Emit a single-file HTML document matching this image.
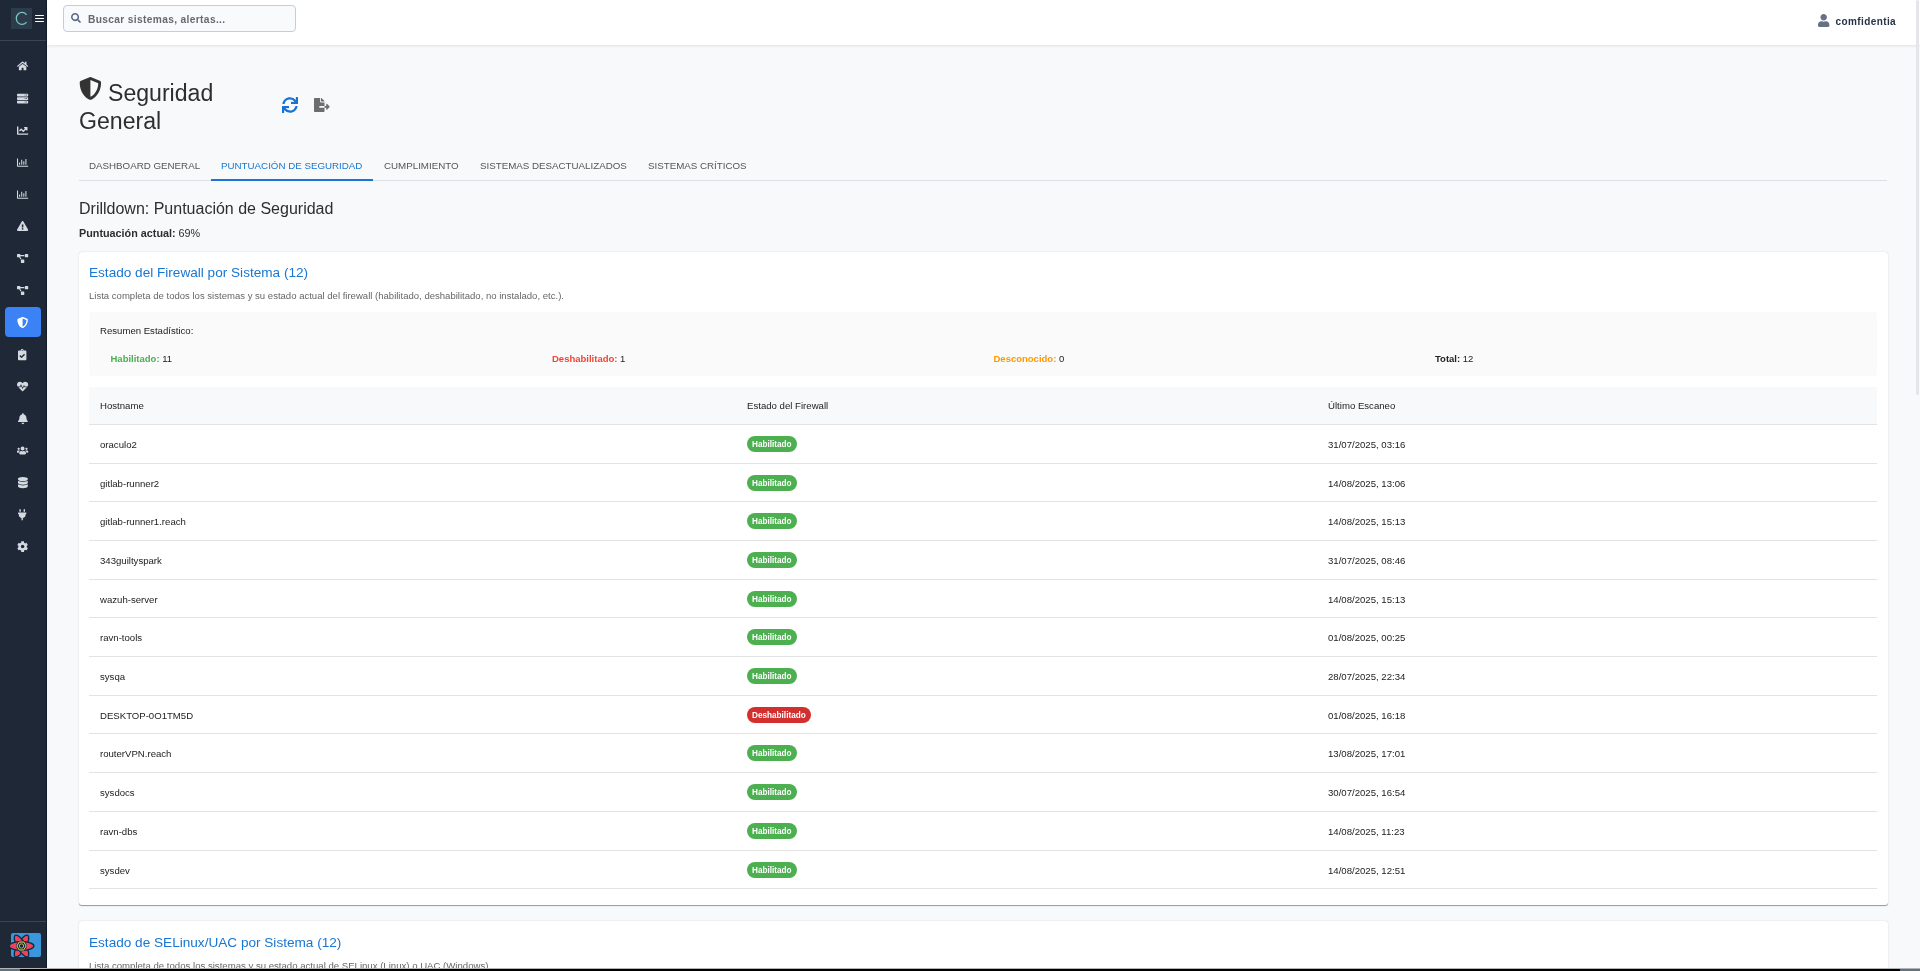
<!DOCTYPE html>
<html><head><meta charset="utf-8">
<style>
*{box-sizing:border-box;margin:0;padding:0}
html,body{width:1920px;height:971px;overflow:hidden;background:#f8f9fb;font-family:"Liberation Sans",sans-serif;color:#222}
.abs{position:absolute;white-space:nowrap}
svg.ic{position:absolute;display:block;overflow:visible}
#sb{position:absolute;left:0;top:0;width:47px;height:968px;background:#1f2837;border-right:1px solid #131b29}
#hdr{position:absolute;left:47px;top:0;width:1873px;height:45px;background:#fff;box-shadow:0 1px 3px rgba(0,0,0,.10)}
#search{position:absolute;left:63px;top:5px;width:233px;height:27px;border:1px solid #c3cde0;border-radius:4px;background:#f8fafc}
.tabbar{position:absolute;left:79px;top:180px;width:1808px;height:1px;background:#dcdfe3}
.tab{position:absolute;top:160px;font-size:9.75px;line-height:12px;color:#555;white-space:nowrap}
.card{position:absolute;left:79px;width:1809px;background:#fff;border-radius:3px;box-shadow:0 1.4px 0.7px -0.7px rgba(0,0,0,.2),0 0.7px 0.7px 0 rgba(0,0,0,.14),0 0.7px 2.1px 0 rgba(0,0,0,.12)}
.td{position:absolute;font-size:9.62px;line-height:14px;color:#222;white-space:nowrap}
.td.r{font-size:9.6px}
.rl{position:absolute;left:89px;width:1788px;height:1px;background:#e3e3e3}
.chip{position:absolute;height:16px;border-radius:8px;padding:1px 5px 0;font-size:8.2px;line-height:15px;font-weight:bold;color:#fff;white-space:nowrap}
.chip.g{background:#4caf50}
.chip.r{background:#d32f2f}
.sum{position:absolute;top:352px;font-size:9.5px;line-height:14px;color:#222;white-space:nowrap}
</style></head>
<body><div id="root" style="position:absolute;left:0;top:0;width:1920px;height:971px;will-change:transform">
<div id="sb"></div>
<div class="abs" style="left:11px;top:8px;width:21px;height:21px;background:#2c3c4b"></div>
<svg class="ic" style="left:11px;top:8px;width:21px;height:21px" viewBox="0 0 21 21"><path d="M15.49 6.76A5.7 6.0 0 1 0 15.49 14.14" fill="none" stroke="#7ec4c2" stroke-width="1.3"/></svg>
<div class="abs" style="left:35.2px;top:15px;width:8.8px;height:1.4px;background:#fff;border-radius:.7px"></div><div class="abs" style="left:35.2px;top:18px;width:8.8px;height:1.4px;background:#fff;border-radius:.7px"></div><div class="abs" style="left:35.2px;top:21px;width:8.8px;height:1.4px;background:#fff;border-radius:.7px"></div>
<div class="abs" style="left:0;top:40px;width:46px;height:1px;background:#3a4452"></div>
<div class="abs" style="left:5px;top:307px;width:36px;height:30px;background:#3b82f6;border-radius:4px"></div>
<svg class="ic" style="left:16.80px;top:61.22px;width:11.20px;height:9.96px;" viewBox="0 0 576 512"><path fill="#d5d9e0" d="M280.37 148.26L96 300.11V464a16 16 0 0 0 16 16l112.06-.29a16 16 0 0 0 15.92-16V368a16 16 0 0 1 16-16h64a16 16 0 0 1 16 16v95.64a16 16 0 0 0 16 16.05L464 480a16 16 0 0 0 16-16V300L295.67 148.26a12.19 12.19 0 0 0-15.3 0zM571.6 251.47L488 182.56V44.05a12 12 0 0 0-12-12h-56a12 12 0 0 0-12 12v72.61L318.47 43a48 48 0 0 0-61 0L4.34 251.47a12 12 0 0 0-1.6 16.9l25.5 31A12 12 0 0 0 45.15 301l235.22-193.74a12.19 12.19 0 0 1 15.3 0L530.9 301a12 12 0 0 0 16.9-1.6l25.5-31a12 12 0 0 0-1.7-16.93z"/></svg>
<svg class="ic" style="left:16.80px;top:92.60px;width:11.20px;height:11.20px;" viewBox="0 0 512 512"><path fill="#d5d9e0" d="M480 160H32c-17.673 0-32-14.327-32-32V64c0-17.673 14.327-32 32-32h448c17.673 0 32 14.327 32 32v64c0 17.673-14.327 32-32 32zm-48-88c-13.255 0-24 10.745-24 24s10.745 24 24 24 24-10.745 24-24-10.745-24-24-24zm-64 0c-13.255 0-24 10.745-24 24s10.745 24 24 24 24-10.745 24-24-10.745-24-24-24zm112 248H32c-17.673 0-32-14.327-32-32v-64c0-17.673 14.327-32 32-32h448c17.673 0 32 14.327 32 32v64c0 17.673-14.327 32-32 32zm-48-88c-13.255 0-24 10.745-24 24s10.745 24 24 24 24-10.745 24-24-10.745-24-24-24zm-64 0c-13.255 0-24 10.745-24 24s10.745 24 24 24 24-10.745 24-24-10.745-24-24-24zm112 248H32c-17.673 0-32-14.327-32-32v-64c0-17.673 14.327-32 32-32h448c17.673 0 32 14.327 32 32v64c0 17.673-14.327 32-32 32zm-48-88c-13.255 0-24 10.745-24 24s10.745 24 24 24 24-10.745 24-24-10.745-24-24-24zm-64 0c-13.255 0-24 10.745-24 24s10.745 24 24 24 24-10.745 24-24-10.745-24-24-24z"/></svg>
<svg class="ic" style="left:16.80px;top:124.60px;width:11.20px;height:11.20px;" viewBox="0 0 512 512"><path fill="#d5d9e0" d="M496 384H64V80c0-8.84-7.16-16-16-16H16C7.16 64 0 71.16 0 80v336c0 17.67 14.33 32 32 32h464c8.84 0 16-7.16 16-16v-32c0-8.84-7.16-16-16-16zM464 96H345.94c-21.38 0-32.09 25.85-16.970 40.97l32.4 32.4L288 242.75l-73.37-73.370c-12.5-12.5-32.76-12.5-45.25 0l-68.69 68.69c-6.25 6.25-6.25 16.38 0 22.63l22.62 22.62c6.25 6.25 16.38 6.25 22.63 0L192 237.25l73.37 73.37c12.5 12.5 32.76 12.5 45.25 0l96-96 32.4 32.4c15.12 15.12 40.97 4.41 40.97-16.97V112c.01-8.84-7.15-16-15.99-16z"/></svg>
<svg class="ic" style="left:16.80px;top:156.60px;width:11.20px;height:11.20px;" viewBox="0 0 512 512"><path fill="#d5d9e0" d="M396.8 352h22.4c6.4 0 12.8-6.4 12.8-12.8V108.8c0-6.4-6.4-12.8-12.8-12.8h-22.4c-6.4 0-12.8 6.4-12.8 12.8v230.4c0 6.4 6.4 12.8 12.8 12.8zm-192 0h22.4c6.4 0 12.8-6.4 12.8-12.8V140.8c0-6.4-6.4-12.8-12.8-12.8h-22.4c-6.4 0-12.8 6.4-12.8 12.8v198.4c0 6.4 6.4 12.8 12.8 12.8zm96 0h22.4c6.4 0 12.8-6.4 12.8-12.8V204.8c0-6.4-6.4-12.8-12.8-12.8h-22.4c-6.4 0-12.8 6.4-12.8 12.8v134.4c0 6.4 6.4 12.8 12.8 12.8zM496 400H48V80c0-8.84-7.16-16-16-16H16C7.16 64 0 71.16 0 80v336c0 17.67 14.33 32 32 32h464c8.84 0 16-7.16 16-16v-16c0-8.84-7.16-16-16-16zm-387.2-48h22.4c6.4 0 12.8-6.4 12.8-12.8v-70.4c0-6.4-6.4-12.8-12.8-12.8h-22.4c-6.4 0-12.8 6.4-12.8 12.8v70.4c0 6.4 6.4 12.8 12.8 12.8z"/></svg>
<svg class="ic" style="left:16.80px;top:188.60px;width:11.20px;height:11.20px;" viewBox="0 0 512 512"><path fill="#d5d9e0" d="M396.8 352h22.4c6.4 0 12.8-6.4 12.8-12.8V108.8c0-6.4-6.4-12.8-12.8-12.8h-22.4c-6.4 0-12.8 6.4-12.8 12.8v230.4c0 6.4 6.4 12.8 12.8 12.8zm-192 0h22.4c6.4 0 12.8-6.4 12.8-12.8V140.8c0-6.4-6.4-12.8-12.8-12.8h-22.4c-6.4 0-12.8 6.4-12.8 12.8v198.4c0 6.4 6.4 12.8 12.8 12.8zm96 0h22.4c6.4 0 12.8-6.4 12.8-12.8V204.8c0-6.4-6.4-12.8-12.8-12.8h-22.4c-6.4 0-12.8 6.4-12.8 12.8v134.4c0 6.4 6.4 12.8 12.8 12.8zM496 400H48V80c0-8.84-7.16-16-16-16H16C7.16 64 0 71.16 0 80v336c0 17.67 14.33 32 32 32h464c8.84 0 16-7.16 16-16v-16c0-8.84-7.16-16-16-16zm-387.2-48h22.4c6.4 0 12.8-6.4 12.8-12.8v-70.4c0-6.4-6.4-12.8-12.8-12.8h-22.4c-6.4 0-12.8 6.4-12.8 12.8v70.4c0 6.4 6.4 12.8 12.8 12.8z"/></svg>
<svg class="ic" style="left:16.80px;top:221.22px;width:11.20px;height:9.96px;" viewBox="0 0 576 512"><path fill="#d5d9e0" d="M569.517 440.013C587.975 472.007 564.806 512 527.94 512H48.054c-36.937 0-59.999-40.055-41.577-71.987L246.423 23.985c18.467-32.009 64.72-31.951 83.154 0l239.94 416.028zM288 354c-25.405 0-46 20.595-46 46s20.595 46 46 46 46-20.595 46-46-20.595-46-46-46zm-43.673-165.346l7.418 136c.347 6.364 5.609 11.346 11.982 11.346h48.546c6.373 0 11.635-4.982 11.982-11.346l7.418-136c.375-6.874-5.098-12.654-11.982-12.654h-63.383c-6.884 0-12.356 5.78-11.981 12.654z"/></svg>
<svg class="ic" style="left:16.80px;top:253.72px;width:11.20px;height:8.96px;" viewBox="0 0 640 512"><path fill="#d5d9e0" d="M384 320H256c-17.67 0-32 14.33-32 32v128c0 17.67 14.33 32 32 32h128c17.67 0 32-14.33 32-32V352c0-17.67-14.330-32-32-32zM192 32c0-17.67-14.33-32-32-32H32C14.33 0 0 14.33 0 32v128c0 17.67 14.33 32 32 32h95.72l73.16 128.04C211.98 300.98 232.4 288 256 288h.28L192 175.51V128h224V64H192V32zM608 0H480c-17.67 0-32 14.33-32 32v128c0 17.67 14.33 32 32 32h128c17.67 0 32-14.33 32-32V32c0-17.67-14.33-32-32-32z"/></svg>
<svg class="ic" style="left:16.80px;top:285.72px;width:11.20px;height:8.96px;" viewBox="0 0 640 512"><path fill="#d5d9e0" d="M384 320H256c-17.67 0-32 14.33-32 32v128c0 17.67 14.33 32 32 32h128c17.67 0 32-14.33 32-32V352c0-17.67-14.330-32-32-32zM192 32c0-17.67-14.33-32-32-32H32C14.33 0 0 14.33 0 32v128c0 17.67 14.33 32 32 32h95.72l73.16 128.04C211.98 300.98 232.4 288 256 288h.28L192 175.51V128h224V64H192V32zM608 0H480c-17.67 0-32 14.33-32 32v128c0 17.67 14.33 32 32 32h128c17.67 0 32-14.33 32-32V32c0-17.67-14.33-32-32-32z"/></svg>
<svg class="ic" style="left:16.80px;top:316.60px;width:11.20px;height:11.20px;" viewBox="0 0 512 512"><path fill="#ffffff" d="M466.5 83.7l-192-80a48.15 48.15 0 0 0-36.9 0l-192 80C27.7 91.1 16 108.6 16 128c0 198.5 114.5 335.7 221.5 380.3 11.8 4.9 25.1 4.9 36.9 0C360.1 472.6 496 349.3 496 128c0-19.4-11.7-36.9-29.5-44.3zM256.1 446.3l-.1-381 175.9 73.3c-3.3 151.4-82.1 261.1-175.8 307.7z"/></svg>
<svg class="ic" style="left:18.20px;top:348.60px;width:8.40px;height:11.20px;" viewBox="0 0 384 512"><path fill="#d5d9e0" d="M336 64h-80c0-35.3-28.7-64-64-64s-64 28.7-64 64H48C21.5 64 0 85.5 0 112v352c0 26.5 21.5 48 48 48h288c26.5 0 48-21.5 48-48V112c0-26.5-21.5-48-48-48zM192 40c13.3 0 24 10.7 24 24s-10.7 24-24 24-24-10.7-24-24 10.7-24 24-24zm121.2 231.8l-143 141.8c-4.7 4.7-12.3 4.6-17-.1l-82.6-83.3c-4.7-4.7-4.6-12.3.1-17L99.1 285c4.7-4.7 12.3-4.6 17 .1l46 46.4 106-105.2c4.7-4.7 12.3-4.6 17 .1l28.2 28.4c4.7 4.8 4.6 12.3-.1 17z"/></svg>
<svg class="ic" style="left:16.80px;top:380.60px;width:11.20px;height:11.20px;" viewBox="0 0 512 512"><path fill="#d5d9e0" d="M320.2 243.8l-49.7 99.4c-6 12.1-23.4 11.7-28.9-.6l-56.9-126.3-30 71.7H60.6l182.5 186.5c7.1 7.3 18.6 7.3 25.7 0L451.4 288H342.3l-22.1-44.2zM473.7 73.9l-2.4-2.5c-51.5-52.6-135.8-52.6-187.4 0L256 100l-27.9-28.5c-51.5-52.7-135.9-52.7-187.4 0l-2.4 2.4C-10.4 123.7-12.5 203 31 256h102.4l35.9-86.2c5.4-12.9 23.6-13.2 29.4-.4l58.2 129.3 49-97.9c5.9-11.8 22.7-11.8 28.6 0l27.6 55.2H481c43.5-53 41.4-132.3-7.3-182.1z"/></svg>
<svg class="ic" style="left:17.50px;top:412.60px;width:9.80px;height:11.20px;" viewBox="0 0 448 512"><path fill="#d5d9e0" d="M224 512c35.32 0 63.97-28.65 63.97-64H160.03c0 35.35 28.65 64 63.97 64zm215.39-149.71c-19.32-20.76-55.470-51.99-55.47-154.29 0-77.7-54.48-139.9-127.94-155.16V32c0-17.67-14.32-32-31.98-32s-31.98 14.33-31.98 32v20.84C118.56 68.1 64.08 130.3 64.08 208c0 102.3-36.15 133.53-55.47 154.29-6 6.45-8.66 14.16-8.61 21.71.11 16.4 12.98 32 32.1 32h383.8c19.12 0 32-15.6 32.1-32 .05-7.55-2.61-15.27-8.61-21.71z"/></svg>
<svg class="ic" style="left:16.80px;top:445.72px;width:11.20px;height:8.96px;" viewBox="0 0 640 512"><path fill="#d5d9e0" d="M96 224c35.3 0 64-28.7 64-64s-28.7-64-64-64-64 28.7-64 64 28.7 64 64 64zm448 0c35.3 0 64-28.7 64-64s-28.7-64-64-64-64 28.7-64 64 28.7 64 64 64zm32 32h-64c-17.6 0-33.5 7.1-45.1 18.6 40.3 22.1 68.9 62 75.1 109.4h66c17.7 0 32-14.3 32-32v-32c0-35.3-28.7-64-64-64zm-256 0c61.9 0 112-50.1 112-112S381.9 32 320 32 208 82.1 208 144s50.1 112 112 112zm76.8 32h-8.3c-20.8 10-43.9 16-68.5 16s-47.6-6-68.5-16h-8.3C179.6 288 128 339.6 128 403.2V432c0 26.5 21.5 48 48 48h288c26.5 0 48-21.5 48-48v-28.8c0-63.6-51.6-115.2-115.2-115.2zm-223.7-13.4C161.5 263.1 145.6 256 128 256H64c-35.3 0-64 28.7-64 64v32c0 17.7 14.3 32 32 32h65.9c6.3-47.4 34.9-87.3 75.2-109.4z"/></svg>
<svg class="ic" style="left:17.50px;top:476.60px;width:9.80px;height:11.20px;" viewBox="0 0 448 512"><path fill="#d5d9e0" d="M448 73.143v45.714C448 159.143 347.667 192 224 192S0 159.143 0 118.857V73.143C0 32.857 100.333 0 224 0s224 32.857 224 73.143zM448 176v102.857C448 319.143 347.667 352 224 352S0 319.143 0 278.857V176c48.125 33.143 136.208 48.572 224 48.572S399.874 209.143 448 176zm0 160v102.857C448 479.143 347.667 512 224 512S0 479.143 0 438.857V336c48.125 33.143 136.208 48.572 224 48.572S399.874 369.143 448 336z"/></svg>
<svg class="ic" style="left:18.20px;top:508.60px;width:8.40px;height:11.20px;" viewBox="0 0 384 512"><path fill="#d5d9e0" d="M320 32a32 32 0 0 0-64 0v96h64zm48 128H16a16 16 0 0 0-16 16v32a16 16 0 0 0 16 16h16v32a160.07 160.07 0 0 0 128 156.8V512h64v-99.2A160.07 160.07 0 0 0 352 256v-32h16a16 16 0 0 0 16-16v-32a16 16 0 0 0-16-16zM128 32a32 32 0 0 0-64 0v96h64z"/></svg>
<svg class="ic" style="left:16.80px;top:540.60px;width:11.20px;height:11.20px;" viewBox="0 0 512 512"><path fill="#d5d9e0" d="M487.4 315.7l-42.6-24.6c4.3-23.2 4.3-47 0-70.2l42.6-24.6c4.9-2.8 7.1-8.6 5.5-14-11.1-35.6-30-67.8-54.7-94.6-3.8-4.1-10-5.1-14.8-2.3L380.8 110c-17.9-15.4-38.5-27.3-60.8-35.1V25.8c0-5.6-3.9-10.5-9.4-11.7-36.7-8.2-74.3-7.8-109.2 0-5.5 1.2-9.4 6.1-9.4 11.7V75c-22.2 7.9-42.8 19.8-60.8 35.1L88.7 85.5c-4.9-2.8-11-1.9-14.8 2.3-24.7 26.7-43.6 58.9-54.7 94.6-1.7 5.4.6 11.2 5.5 14L67.3 221c-4.3 23.2-4.3 47 0 70.2l-42.6 24.6c-4.9 2.8-7.1 8.6-5.5 14 11.1 35.6 30 67.8 54.7 94.6 3.8 4.1 10 5.1 14.8 2.3l42.6-24.6c17.9 15.4 38.5 27.3 60.8 35.1v49.2c0 5.6 3.9 10.5 9.4 11.7 36.7 8.2 74.3 7.8 109.2 0 5.5-1.2 9.4-6.1 9.4-11.7v-49.2c22.2-7.9 42.8-19.8 60.8-35.1l42.6 24.6c4.9 2.8 11 1.9 14.8-2.3 24.7-26.7 43.6-58.9 54.7-94.6 1.5-5.5-.7-11.3-5.6-14.1zM256 336c-44.1 0-80-35.9-80-80s35.9-80 80-80 80 35.9 80 80-35.9 80-80 80z"/></svg>

<div class="abs" style="left:0;top:921px;width:46px;height:1px;background:#3a4452"></div>
<div class="abs" style="left:11px;top:933px;width:30px;height:24px;background:#3a97dc;border-radius:2px"></div>
<svg class="ic" style="left:8px;top:933px;width:27px;height:26px" viewBox="-13.5 -13 27 26">
 <g stroke="#0d2a45" stroke-width="1.3" fill="#f0435a">
  <ellipse cx="0" cy="0" rx="12.4" ry="4.3" transform="rotate(-60)"/>
  <ellipse cx="0" cy="0" rx="12.4" ry="4.3" transform="rotate(60)"/>
  <ellipse cx="0" cy="0" rx="12.4" ry="4.3"/>
 </g>
 <circle cx="0" cy="0" r="5.4" fill="#0d2a45"/>
 <polygon points="4.6,0 2.3,3.98 -2.3,3.98 -4.6,0 -2.3,-3.98 2.3,-3.98" fill="none" stroke="#e9d84a" stroke-width="1"/>
 <circle cx="0" cy="0" r="2.2" fill="none" stroke="#e9d84a" stroke-width=".8"/>
</svg>

<div id="hdr"></div>
<div id="search"></div>
<svg class="ic" style="left:71.00px;top:13.20px;width:10.00px;height:10.00px;" viewBox="0 0 512 512"><path fill="#5a6a84" d="M505 442.7L405.3 343c-4.5-4.5-10.6-7-17-7H372c27.6-35.3 44-79.7 44-128C416 93.1 322.9 0 208 0S0 93.1 0 208s93.1 208 208 208c48.3 0 92.7-16.4 128-44v16.3c0 6.4 2.5 12.5 7 17l99.7 99.7c9.4 9.4 24.6 9.4 33.9 0l28.3-28.3c9.4-9.4 9.4-24.6.1-34zM208 336c-70.7 0-128-57.2-128-128 0-70.7 57.2-128 128-128 70.7 0 128 57.2 128 128 0 70.7-57.2 128-128 128z"/></svg>
<div class="abs" style="left:88px;top:12.8px;font-size:10.2px;line-height:13px;font-weight:bold;letter-spacing:0.35px;color:#65696e">Buscar sistemas, alertas...</div>
<svg class="ic" style="left:1818.00px;top:13.50px;width:11.38px;height:13.00px;" viewBox="0 0 448 512"><path fill="#677185" d="M224 256c70.7 0 128-57.3 128-128S294.7 0 224 0 96 57.3 96 128s57.3 128 128 128zm89.6 32h-16.7c-22.2 10.2-46.9 16-72.9 16s-50.6-5.8-72.9-16h-16.7C60.2 288 0 348.2 0 422.4V464c0 26.5 21.5 48 48 48h352c26.5 0 48-21.5 48-48v-41.6c0-74.2-60.2-134.4-134.4-134.4z"/></svg>
<div class="abs" style="left:1835.5px;top:15.3px;font-size:10px;letter-spacing:0.4px;line-height:13px;font-weight:bold;color:#283245">comfidentia</div>

<!-- right scrollbar -->
<div class="abs" style="left:1916px;top:0;width:3px;height:395px;background:#e4e6e9;border-radius:2px"></div>

<svg class="ic" style="left:79.10px;top:77.00px;width:22.80px;height:22.80px;" viewBox="0 0 512 512"><path fill="#333333" d="M466.5 83.7l-192-80a48.15 48.15 0 0 0-36.9 0l-192 80C27.7 91.1 16 108.6 16 128c0 198.5 114.5 335.7 221.5 380.3 11.8 4.9 25.1 4.9 36.9 0C360.1 472.6 496 349.3 496 128c0-19.4-11.7-36.9-29.5-44.3zM256.1 446.3l-.1-381 175.9 73.3c-3.3 151.4-82.1 261.1-175.8 307.7z"/></svg>
<div class="abs" style="left:108px;top:79px;font-size:23.1px;line-height:28px;color:#2e2e2e">Seguridad</div>
<div class="abs" style="left:79px;top:107px;font-size:23.1px;line-height:28px;color:#2e2e2e">General</div>
<svg class="ic" style="left:282.00px;top:97.00px;width:16.00px;height:16.00px;" viewBox="0 0 512 512"><path fill="#1672d4" d="M440.65 12.57l4 82.77A247.16 247.16 0 0 0 255.83 8C134.73 8 33.91 94.92 12.29 209.82A12 12 0 0 0 24.09 224h49.05a12 12 0 0 0 11.67-9.26 175.91 175.91 0 0 1 317-56.94l-101.46-4.86a12 12 0 0 0-12.57 12v47.41a12 12 0 0 0 12 12H500a12 12 0 0 0 12-12V12a12 12 0 0 0-12-12h-47.37a12 12 0 0 0-11.98 12.57zM255.83 432a175.61 175.61 0 0 1-146-77.8l101.8 4.87a12 12 0 0 0 12.57-12v-47.4a12 12 0 0 0-12-12H12a12 12 0 0 0-12 12V500a12 12 0 0 0 12 12h47.35a12 12 0 0 0 12-12.6l-4.15-82.57A247.17 247.17 0 0 0 255.83 504c121.11 0 221.93-86.92 243.55-201.82a12 12 0 0 0-11.8-14.18h-49.05a12 12 0 0 0-11.67 9.26A175.86 175.86 0 0 1 255.83 432z"/></svg>
<svg class="ic" style="left:314.00px;top:98.00px;width:15.75px;height:14.00px;" viewBox="0 0 576 512"><path fill="#6d6d6d" d="M384 121.9c0-6.3-2.5-12.4-7-16.9L279.1 7c-4.5-4.5-10.6-7-17-7H256v128h128zM571 308l-95.7-96.4c-10.1-10.1-27.4-3-27.4 11.3V288h-64v64h64v65.2c0 14.3 17.3 21.4 27.4 11.3L571 332c6.6-6.6 6.6-17.4 0-24zm-379 28v-32c0-8.8 7.2-16 16-16h176V160H248c-13.2 0-24-10.8-24-24V0H24C10.7 0 0 10.7 0 24v464c0 13.3 10.7 24 24 24h336c13.3 0 24-10.7 24-24V352H208c-8.8 0-16-7.2-16-16z"/></svg>

<div class="tabbar"></div>
<div class="abs" style="left:211px;top:179px;width:162px;height:2px;background:#1976d2"></div>
<div class="tab" style="left:89px">DASHBOARD GENERAL</div>
<div class="tab" style="left:221px;color:#1976d2">PUNTUACIÓN DE SEGURIDAD</div>
<div class="tab" style="left:384px">CUMPLIMIENTO</div>
<div class="tab" style="left:480px">SISTEMAS DESACTUALIZADOS</div>
<div class="tab" style="left:648px">SISTEMAS CRÍTICOS</div>

<div class="abs" style="left:79px;top:199px;font-size:16.0px;line-height:20px;color:#2e2e2e">Drilldown: Puntuación de Seguridad</div>
<div class="abs" style="left:79px;top:226px;font-size:10.8px;line-height:14px;color:#2e2e2e"><b>Puntuación actual:</b> 69%</div>

<div class="card" style="top:252px;height:653px"></div>
<div class="abs" style="left:89px;top:264px;font-size:13.6px;line-height:17px;color:#1976d2">Estado del Firewall por Sistema (12)</div>
<div class="abs" style="left:89px;top:290px;font-size:9.56px;line-height:12px;color:#666">Lista completa de todos los sistemas y su estado actual del firewall (habilitado, deshabilitado, no instalado, etc.).</div>

<div class="abs" style="left:89px;top:312px;width:1788px;height:64px;background:#fafafa;border-radius:3px"></div>
<div class="abs" style="left:100px;top:324px;font-size:9.6px;line-height:13px;color:#222">Resumen Estadístico:</div>
<div class="sum" style="left:110.5px"><b style="color:#4caf50">Habilitado:</b> 11</div>
<div class="sum" style="left:552px"><b style="color:#f44336">Deshabilitado:</b> 1</div>
<div class="sum" style="left:993.5px"><b style="color:#ff9800">Desconocido:</b> 0</div>
<div class="sum" style="left:1435px"><b>Total:</b> 12</div>

<div class="abs" style="left:89px;top:387px;width:1788px;height:37px;background:#f8f9fa"></div>
<div class="rl" style="top:424px"></div>
<div class="td" style="left:100px;top:399px">Hostname</div>
<div class="td" style="left:747px;top:399px">Estado del Firewall</div>
<div class="td" style="left:1328px;top:399px">Último Escaneo</div>
<div class="rl" style="top:463px"></div>
<div class="td r" style="left:100px;top:438.30px">oraculo2</div>
<div class="chip g" style="left:747px;top:436.30px">Habilitado</div>
<div class="td r" style="left:1328px;top:438.30px">31/07/2025, 03:16</div>
<div class="rl" style="top:501px"></div>
<div class="td r" style="left:100px;top:476.80px">gitlab-runner2</div>
<div class="chip g" style="left:747px;top:474.80px">Habilitado</div>
<div class="td r" style="left:1328px;top:476.80px">14/08/2025, 13:06</div>
<div class="rl" style="top:540px"></div>
<div class="td r" style="left:100px;top:515.30px">gitlab-runner1.reach</div>
<div class="chip g" style="left:747px;top:513.30px">Habilitado</div>
<div class="td r" style="left:1328px;top:515.30px">14/08/2025, 15:13</div>
<div class="rl" style="top:579px"></div>
<div class="td r" style="left:100px;top:554.30px">343guiltyspark</div>
<div class="chip g" style="left:747px;top:552.30px">Habilitado</div>
<div class="td r" style="left:1328px;top:554.30px">31/07/2025, 08:46</div>
<div class="rl" style="top:617px"></div>
<div class="td r" style="left:100px;top:592.80px">wazuh-server</div>
<div class="chip g" style="left:747px;top:590.80px">Habilitado</div>
<div class="td r" style="left:1328px;top:592.80px">14/08/2025, 15:13</div>
<div class="rl" style="top:656px"></div>
<div class="td r" style="left:100px;top:631.30px">ravn-tools</div>
<div class="chip g" style="left:747px;top:629.30px">Habilitado</div>
<div class="td r" style="left:1328px;top:631.30px">01/08/2025, 00:25</div>
<div class="rl" style="top:695px"></div>
<div class="td r" style="left:100px;top:670.30px">sysqa</div>
<div class="chip g" style="left:747px;top:668.30px">Habilitado</div>
<div class="td r" style="left:1328px;top:670.30px">28/07/2025, 22:34</div>
<div class="rl" style="top:733px"></div>
<div class="td r" style="left:100px;top:708.80px">DESKTOP-0O1TM5D</div>
<div class="chip r" style="left:747px;top:706.80px">Deshabilitado</div>
<div class="td r" style="left:1328px;top:708.80px">01/08/2025, 16:18</div>
<div class="rl" style="top:772px"></div>
<div class="td r" style="left:100px;top:747.30px">routerVPN.reach</div>
<div class="chip g" style="left:747px;top:745.30px">Habilitado</div>
<div class="td r" style="left:1328px;top:747.30px">13/08/2025, 17:01</div>
<div class="rl" style="top:811px"></div>
<div class="td r" style="left:100px;top:786.30px">sysdocs</div>
<div class="chip g" style="left:747px;top:784.30px">Habilitado</div>
<div class="td r" style="left:1328px;top:786.30px">30/07/2025, 16:54</div>
<div class="rl" style="top:850px"></div>
<div class="td r" style="left:100px;top:825.30px">ravn-dbs</div>
<div class="chip g" style="left:747px;top:823.30px">Habilitado</div>
<div class="td r" style="left:1328px;top:825.30px">14/08/2025, 11:23</div>
<div class="rl" style="top:888px"></div>
<div class="td r" style="left:100px;top:863.80px">sysdev</div>
<div class="chip g" style="left:747px;top:861.80px">Habilitado</div>
<div class="td r" style="left:1328px;top:863.80px">14/08/2025, 12:51</div>


<div class="card" style="top:921px;height:60px"></div>
<div class="abs" style="left:89px;top:934px;font-size:13.6px;line-height:17px;color:#1976d2">Estado de SELinux/UAC por Sistema (12)</div>
<div class="abs" style="left:89px;top:960px;font-size:9.6px;line-height:12px;color:#666">Lista completa de todos los sistemas y su estado actual de SELinux (Linux) o UAC (Windows).</div>

<!-- bottom strip -->
<div class="abs" style="left:0;top:968px;width:1920px;height:1px;background:#b4b4b4"></div>
<div class="abs" style="left:0;top:969px;width:1920px;height:2px;background:#000"></div>
<div class="abs" style="left:0;top:969px;width:20px;height:2px;background:#5f737d"></div>
<div class="abs" style="left:1900px;top:969px;width:20px;height:2px;background:#5f737d"></div>
</div></body></html>
